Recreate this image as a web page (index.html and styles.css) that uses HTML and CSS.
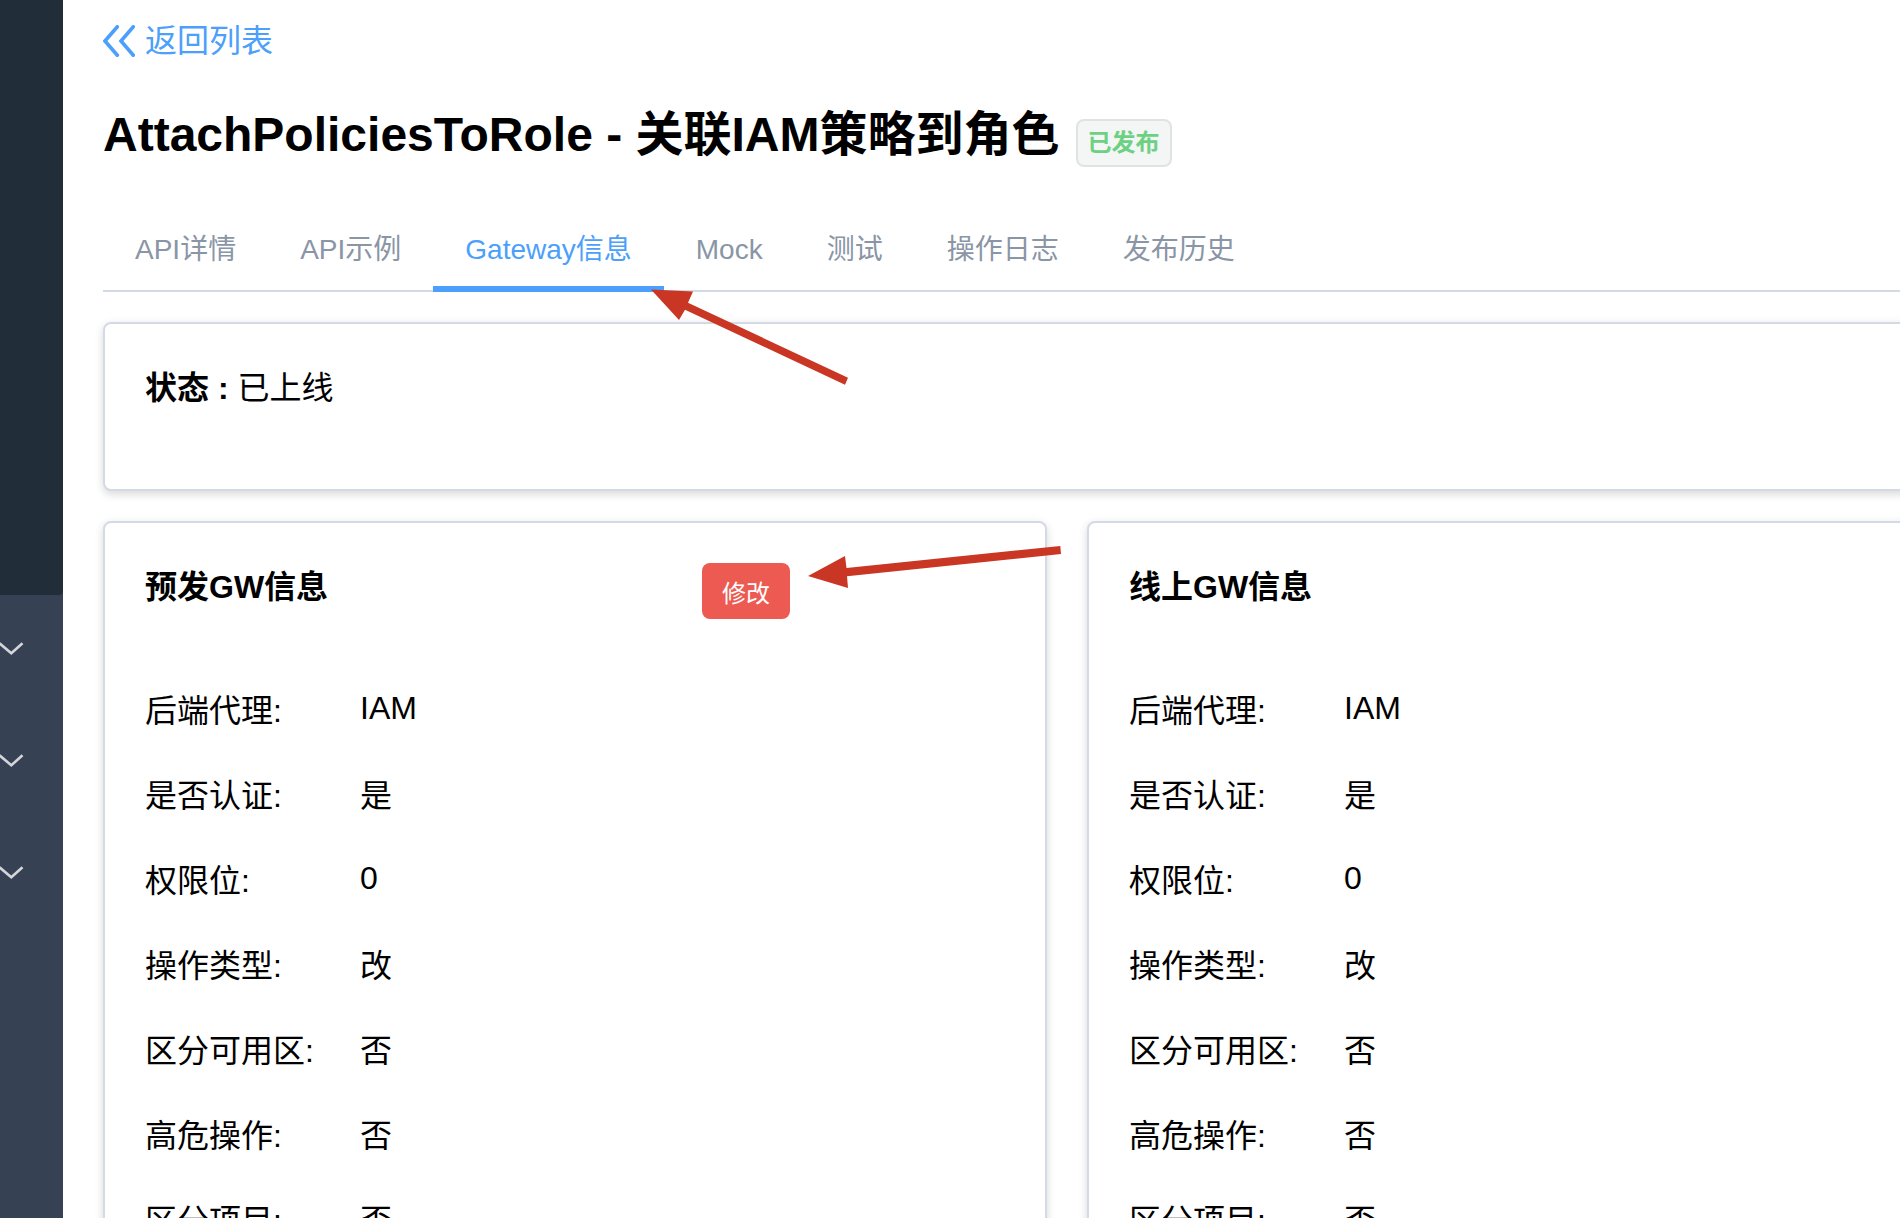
FILE: index.html
```html
<!DOCTYPE html>
<html lang="zh-CN">
<head>
<meta charset="utf-8">
<title>AttachPoliciesToRole</title>
<link rel="stylesheet" href="styles.css">
</head>
<body>
<div class="app">
  <aside class="sidebar">
    <div class="sidebar-open"></div>
    <button class="sidebar-item" type="button" aria-label="展开菜单"><svg class="chevron" viewBox="0 0 24 12"><path d="M-0.5 0.3L11.3 10.3L22.5 0.3"/></svg></button>
    <button class="sidebar-item" type="button" aria-label="展开菜单"><svg class="chevron" viewBox="0 0 24 12"><path d="M-0.5 0.3L11.3 10.3L22.5 0.3"/></svg></button>
    <button class="sidebar-item" type="button" aria-label="展开菜单"><svg class="chevron" viewBox="0 0 24 12"><path d="M-0.5 0.3L11.3 10.3L22.5 0.3"/></svg></button>
  </aside>
  <main class="main">
    <div class="content">
      <a class="back" href="#"><svg class="back-icon" viewBox="0 0 32 32"><path d="M14.3 1.8L2 16L14.3 30.2M30.3 1.8L18 16L30.3 30.2"/></svg>返回列表</a>
      <header class="heading">
        <h1 class="title">AttachPoliciesToRole - 关联IAM策略到角色</h1>
        <span class="badge">已发布</span>
      </header>
      <nav class="tabs">
        <a class="tab" href="#">API详情</a>
        <a class="tab" href="#">API示例</a>
        <a class="tab tab-active" href="#">Gateway信息</a>
        <a class="tab" href="#">Mock</a>
        <a class="tab" href="#">测试</a>
        <a class="tab" href="#">操作日志</a>
        <a class="tab" href="#">发布历史</a>
      </nav>
      <section class="card status"><p class="status-text"><strong>状态 : </strong>已上线</p></section>
      <div class="columns">
        <section class="card">
          <div class="card-head">
            <h2 class="card-title">预发GW信息</h2>
            <button class="edit" type="button">修改</button>
          </div>
          <dl class="fields">
            <div class="field"><dt>后端代理:</dt><dd class="latin">IAM</dd></div>
            <div class="field"><dt>是否认证:</dt><dd>是</dd></div>
            <div class="field"><dt>权限位:</dt><dd class="latin">0</dd></div>
            <div class="field"><dt>操作类型:</dt><dd>改</dd></div>
            <div class="field"><dt>区分可用区:</dt><dd>否</dd></div>
            <div class="field"><dt>高危操作:</dt><dd>否</dd></div>
            <div class="field"><dt>区分项目:</dt><dd>否</dd></div>
          </dl>
        </section>
        <section class="card">
          <div class="card-head">
            <h2 class="card-title">线上GW信息</h2>
          </div>
          <dl class="fields">
            <div class="field"><dt>后端代理:</dt><dd class="latin">IAM</dd></div>
            <div class="field"><dt>是否认证:</dt><dd>是</dd></div>
            <div class="field"><dt>权限位:</dt><dd class="latin">0</dd></div>
            <div class="field"><dt>操作类型:</dt><dd>改</dd></div>
            <div class="field"><dt>区分可用区:</dt><dd>否</dd></div>
            <div class="field"><dt>高危操作:</dt><dd>否</dd></div>
            <div class="field"><dt>区分项目:</dt><dd>否</dd></div>
          </dl>
        </section>
      </div>
    </div>
  </main>
  <svg class="arrows" width="1100" height="620" viewBox="0 0 1100 620" aria-hidden="true">
    <path d="M651 289.5L693 291.5L688 302.7L848 377.7L845 384.7L685 309.7L679 320Z"/>
    <path d="M808 576L845 556L846.5 568L1060.3 546L1061 554L847 576.3L848 588Z"/>
  </svg>
</div>
</body>
</html>
```

FILE: styles.css
```css
* { box-sizing: border-box; }

body {
  margin: 0;
  background: #fff;
  color: #000;
  font-family: "Liberation Sans", "Noto Sans CJK SC", sans-serif;
  font-size: 32px;
  line-height: 48px;
}

h1, h2, p, dl, dd { margin: 0; }
a { text-decoration: none; }
button { border: 0; font-family: inherit; }

.app {
  position: relative;
  display: flex;
  height: 100vh;
  overflow: hidden;
}

.sidebar {
  flex: none;
  width: 63px;
  background: #364153;
}
.sidebar-open {
  height: 595px;
  background: #222d3a;
  border-bottom-right-radius: 4px;
}
.sidebar-item {
  display: flex;
  align-items: center;
  width: 100%;
  height: 112px;
  padding: 0 0 4px;
  background: none;
}
.chevron {
  width: 24px;
  height: 12px;
  overflow: visible;
  fill: none;
  stroke: #d3d5d9;
  stroke-width: 2.6;
}

.main {
  flex: 1;
  min-width: 0;
  padding: 17px 0 0 40px;
  overflow: hidden;
}
/* The detail area is wider than the pane and runs off its right edge. */
.content { margin-right: -131px; }

.back {
  display: flex;
  align-items: center;
  gap: 10px;
  width: fit-content;
  color: #4c9ffa;
}
.back-icon {
  width: 32px;
  height: 32px;
  fill: none;
  stroke: currentColor;
  stroke-width: 3.6;
  stroke-linecap: round;
}

.heading {
  display: flex;
  align-items: flex-start;
  gap: 16px;
  margin-top: 36px;
}
.title {
  font-size: 48px;
  line-height: 68px;
}
.badge {
  margin-top: 18px;
  padding: 0 10px;
  border: 2px solid #e0e3e4;
  border-radius: 8px;
  background: #f4f5f5;
  color: #6dd183;
  font-size: 24px;
  font-weight: bold;
  line-height: 44px;
}

.tabs {
  display: flex;
  height: 84px;
  margin-top: 39px;
  border-bottom: 2px solid #d4dae5;
}
.tab {
  height: 84px;
  padding: 0 32px;
  color: #8a95a6;
  font-size: 28px;
  line-height: 84px;
}
.tab-active {
  border-bottom: 6px solid #4c9ffa;
  color: #4c9ffa;
}

.card {
  padding: 40px;
  border: 2px solid #d4dae5;
  border-radius: 8px;
  background: #fff;
  box-shadow: 0 4px 8px rgba(0, 0, 0, .12), 0 0 12px rgba(0, 0, 0, .04);
}
.status {
  height: 169px;
  margin-top: 30px;
}
.columns {
  display: grid;
  grid-template-columns: 1fr 1fr;
  gap: 40px;
  margin-top: 30px;
}
.card-head {
  display: flex;
  height: 56px;
}
.card-title {
  flex: none;
  width: 557px;
  font-size: 32px;
}
.edit {
  height: 56px;
  padding: 0 20px;
  border-radius: 8px;
  background: #ec5a51;
  color: #fff;
  font-size: 24px;
}

.fields { margin-top: 50px; }
.field {
  display: flex;
  height: 85px;
  line-height: 85px;
}
.field dt { width: 25%; }
.field .latin { line-height: 78px; }

.arrows {
  position: absolute;
  top: 0;
  left: 0;
  fill: #c93624;
  pointer-events: none;
}
```
